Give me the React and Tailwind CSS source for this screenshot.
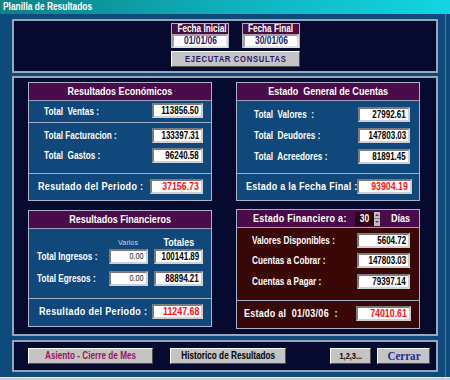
import React from "react";

const F = "font-['Liberation_Sans',Arial,sans-serif]";

function S({ children, o = "origin-left", cls = "scale-x-[0.82]" }) {
  return <span className={`inline-block whitespace-pre ${cls} ${o}`}>{children}</span>;
}

function Box({ v, w = "w-[51px]", kind = "n" }) {
  const txt =
    kind === "red"
      ? "text-[11px] font-bold text-[#ff1010]"
      : kind === "big"
      ? "text-[10px] font-bold text-black"
      : kind === "small"
      ? "text-[9px] font-normal text-[#202020]"
      : "text-[10px] font-bold text-black";
  return (
    <div
      className={`${w} shrink-0 h-[15px] bg-white border-2 border-t-[#7c7c7c] border-l-[#7c7c7c] border-b-[#d0d0d0] border-r-[#d0d0d0] flex items-center justify-end pr-[2px] leading-none ${txt}`}
    >
      <S o="origin-right" cls="scale-x-[0.8]">{v}</S>
    </div>
  );
}

function Label({ children, cls = "" }) {
  return (
    <div className={`min-w-0 flex-1 whitespace-pre text-white font-bold leading-none ${cls}`}>
      <S>{children}</S>
    </div>
  );
}

function Header({ children, cls = "" }) {
  return (
    <div
      className={`h-[18px] shrink-0 bg-[#4b0a4a] border-b border-[#9aa4bc] flex items-center text-white font-bold text-[11px] leading-none whitespace-nowrap ${cls}`}
    >
      {children}
    </div>
  );
}

function Sep() {
  return <div className="h-px shrink-0 bg-[#a4b0c8]" />;
}

const btn =
  "h-[16px] bg-[#c4c4c4] border border-t-white border-l-white border-b-[#505050] border-r-[#505050] font-bold flex items-center justify-center leading-none whitespace-nowrap";

export default function App() {
  return (
    <div className={`w-[450px] h-[380px] bg-[#0f4a7d] flex flex-col overflow-hidden ${F}`}>
      {/* title */}
      <div className="h-[14px] shrink-0 bg-gradient-to-r from-[#0a8286] via-[#0fb0bc] to-[#12d6e4] text-white text-[10px] font-bold leading-[14px] pl-[3px]">
        <S cls="scale-x-[0.84]">Planilla de Resultados</S>
      </div>

      <div className="flex-1 flex flex-col pl-[12px] pt-[5px] border-r border-[#4d7ea8] w-[446px]">
        {/* top panel */}
        <div className="w-[426px] h-[54px] shrink-0 bg-[#050a2e] border-2 border-[#98a6bc] flex flex-col pl-[157px] pt-[2px]">
          <div className="flex gap-[13px]">
            {[
              ["Fecha Inicial", "01/01/06"],
              ["Fecha Final", "30/01/06"],
            ].map(([h, v]) => (
              <div key={h} className="w-[58px] h-[25px] border border-[#b0b0b8] flex flex-col">
                <div className="h-[10px] bg-[#4b0a4a] text-white text-[10px] font-bold leading-[10px] text-center whitespace-nowrap">
                  <S o="origin-center">{h}</S>
                </div>
                <div className="flex-1 bg-white border-2 border-t-[#a0a0a0] border-l-[#a0a0a0] border-b-[#e0e0e0] border-r-[#e0e0e0] text-[#2a1a6a] text-[10px] font-bold flex items-center justify-center leading-none">
                  <S o="origin-center" cls="scale-x-[0.85]">{v}</S>
                </div>
              </div>
            ))}
          </div>
          <div className={`mt-[3px] w-[129px] ${btn} text-[#2c1a6c] text-[9px] tracking-[0.8px]`}>
            <S o="origin-center" cls="scale-x-[0.85]">EJECUTAR CONSULTAS</S>
          </div>
        </div>

        {/* middle panel */}
        <div className="mt-[3px] w-[426px] h-[260px] shrink-0 bg-[#050a2e] border-2 border-[#98a6bc] flex gap-[24px] pl-[14px] pt-[4px]">
          {/* left column */}
          <div className="w-[184px] flex flex-col gap-[9px]">
            <div className="h-[119px] bg-[#10487c] border border-[#a8b2c8] flex flex-col">
              <Header cls="justify-center">
                <S o="origin-center">Resultados Económicos</S>
              </Header>
              <div className="h-[21px] flex items-start pt-[2px] pr-[8px]">
                <Label cls="text-[10px] pl-[15px] pt-[4px]">{"Total  Ventas :"}</Label>
                <Box v="113856.50" />
              </div>
              <Sep />
              <div className="h-[50px] flex flex-col pt-[5px] gap-[5px] pr-[8px]">
                <div className="flex items-center">
                  <Label cls="text-[10px] pl-[15px]">Total Facturacion :</Label>
                  <Box v="133397.31" />
                </div>
                <div className="flex items-center">
                  <Label cls="text-[10px] pl-[15px]">{"Total  Gastos :"}</Label>
                  <Box v="96240.58" />
                </div>
              </div>
              <Sep />
              <div className="flex items-center pr-[8px] pt-[5px]">
                <Label cls="text-[11px] pl-[9px] tracking-[0.4px]">{"Resutado del Periodo :"}</Label>
                <Box v="37156.73" w="w-[53px]" kind="red" />
              </div>
            </div>

            <div className="h-[117px] bg-[#10487c] border border-[#a8b2c8] flex flex-col">
              <Header cls="justify-center">
                <S o="origin-center">Resultados Financieros</S>
              </Header>
              <div className="h-[69px] flex flex-col pr-[8px]">
                <div className="flex justify-end items-end h-[20px] pb-[1px]">
                  <div className="w-[39px] text-center text-[8px] text-[#c8d0e0] leading-none pb-[1px]">
                    <S o="origin-center" cls="scale-x-[0.9]">Varios</S>
                  </div>
                  <div className="w-[49px] ml-[6px] text-center text-[11px] font-bold text-white leading-none">
                    <S o="origin-center">Totales</S>
                  </div>
                </div>
                <div className="flex items-center">
                  <Label cls="text-[10px] pl-[8px]">Total Ingresos :</Label>
                  <Box v="0.00" w="w-[39px]" kind="small" />
                  <div className="w-[6px] shrink-0" />
                  <Box v="100141.89" w="w-[49px]" kind="big" />
                </div>
                <div className="flex items-center mt-[7px]">
                  <Label cls="text-[10px] pl-[8px]">Total Egresos :</Label>
                  <Box v="0.00" w="w-[39px]" kind="small" />
                  <div className="w-[6px] shrink-0" />
                  <Box v="88894.21" w="w-[49px]" kind="big" />
                </div>
              </div>
              <Sep />
              <div className="flex items-center pr-[8px] pt-[5px]">
                <Label cls="text-[11px] pl-[10px] tracking-[0.4px]">Resultado del Periodo :</Label>
                <Box v="11247.68" w="w-[51px]" kind="red" />
              </div>
            </div>
          </div>

          {/* right column */}
          <div className="w-[184px] flex flex-col gap-[8px]">
            <div className="h-[119px] bg-[#10487c] border border-[#a8b2c8] flex flex-col">
              <Header cls="justify-center">
                <S o="origin-center">{"Estado  General de Cuentas"}</S>
              </Header>
              <div className="h-[72px] flex flex-col pt-[6px] gap-[6px] pr-[9px]">
                <div className="flex items-center">
                  <Label cls="text-[10px] pl-[17px]">{"Total  Valores  :"}</Label>
                  <Box v="27992.61" w="w-[52px]" />
                </div>
                <div className="flex items-center">
                  <Label cls="text-[10px] pl-[17px]">{"Total  Deudores :"}</Label>
                  <Box v="147803.03" w="w-[52px]" />
                </div>
                <div className="flex items-center">
                  <Label cls="text-[10px] pl-[17px]">{"Total  Acreedores :"}</Label>
                  <Box v="81891.45" w="w-[52px]" />
                </div>
              </div>
              <Sep />
              <div className="flex items-center pr-[7px] pt-[5px]">
                <Label cls="text-[11px] pl-[9px] tracking-[0.3px]">Estado a la Fecha Final :</Label>
                <Box v="93904.19" w="w-[55px]" kind="red" />
              </div>
            </div>

            <div className="h-[120px] bg-[#3a0707] border border-[#a8b2c8] flex flex-col">
              <Header cls="pl-[16px]">
                <div className="w-[102px] tracking-[0.3px]">
                  <S>Estado Financiero a:</S>
                </div>
                <div className="w-[19px] h-[14px] bg-[#2a0516] text-white text-[10px] font-bold flex items-center justify-center">
                  <S o="origin-center" cls="scale-x-[0.85]">30</S>
                </div>
                <div className="w-[6px] h-[14px] flex flex-col">
                  <div className="flex-1 bg-[#c0c0c0] border-b border-[#808080] flex items-center justify-center">
                    <div className="w-0 h-0 border-l-[2px] border-r-[2px] border-b-[2px] border-l-transparent border-r-transparent border-b-[#404040]" />
                  </div>
                  <div className="flex-1 bg-[#c0c0c0] flex items-center justify-center">
                    <div className="w-0 h-0 border-l-[2px] border-r-[2px] border-t-[2px] border-l-transparent border-r-transparent border-t-[#404040]" />
                  </div>
                </div>
                <span className="ml-[11px]">
                  <S>Días</S>
                </span>
              </Header>
              <div className="h-[72px] flex flex-col pt-[5px] gap-[5px] pr-[9px]">
                <div className="flex items-center">
                  <Label cls="text-[10px] pl-[15px]">Valores Disponibles :</Label>
                  <Box v="5604.72" w="w-[53px]" />
                </div>
                <div className="flex items-center">
                  <Label cls="text-[10px] pl-[15px]">Cuentas a Cobrar :</Label>
                  <Box v="147803.03" w="w-[53px]" />
                </div>
                <div className="flex items-center mt-[1px]">
                  <Label cls="text-[10px] pl-[15px]">Cuentas a Pagar :</Label>
                  <Box v="79397.14" w="w-[53px]" />
                </div>
              </div>
              <Sep />
              <div className="flex items-center pr-[8px] pt-[5px]">
                <Label cls="text-[11px] pl-[7px] tracking-[0.3px]">{"Estado al  01/03/06  :"}</Label>
                <Box v="74010.61" w="w-[55px]" kind="red" />
              </div>
            </div>
          </div>
        </div>

        {/* bottom panel */}
        <div className="mt-[4px] w-[426px] h-[32px] shrink-0 bg-[#050a2e] border-2 border-[#98a6bc] flex items-center pl-[14px]">
          <div className={`w-[125px] ${btn} text-[#9a1458] text-[10px]`}>
            <S o="origin-center">Asiento - Cierre de Mes</S>
          </div>
          <div className={`ml-[17px] w-[116px] ${btn} text-black text-[10px]`}>
            <S o="origin-center">Historico de Resultados</S>
          </div>
          <div className={`ml-[44px] w-[41px] ${btn} text-black text-[9px]`}>
            <S o="origin-center">1,2,3...</S>
          </div>
          <div className={`ml-[6px] w-[53px] ${btn} text-[#1a2c9a] text-[12px] font-['Liberation_Serif',serif]`}>
            <S o="origin-center" cls="scale-x-[0.92]">Cerrar</S>
          </div>
        </div>
        <div className="flex-1" />
      </div>
      <div className="h-[3px] shrink-0 bg-[#c8ccd2] border-t border-[#e8e8e8]" />
    </div>
  );
}
